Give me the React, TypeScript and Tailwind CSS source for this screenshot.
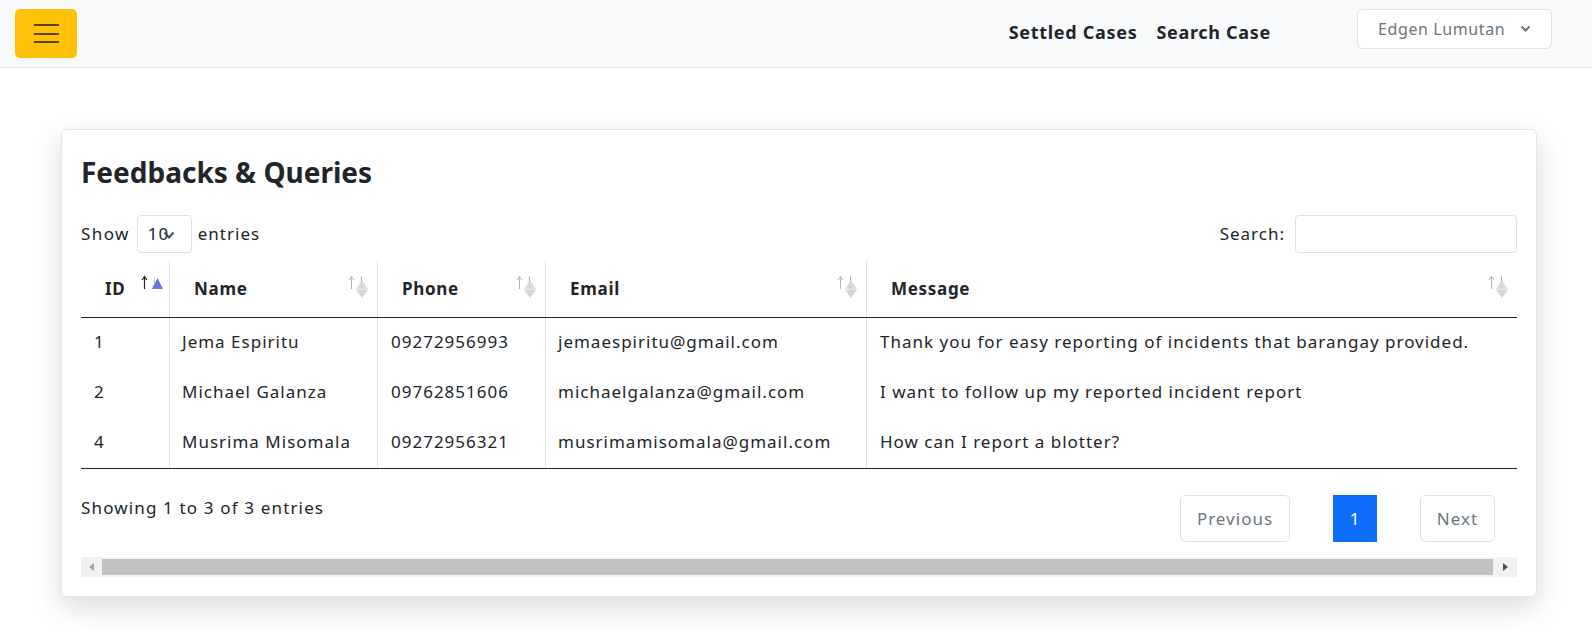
import React from 'react';

type Row = { id: string; name: string; phone: string; email: string; message: string };

const ROWS: Row[] = [
  {
    id: '1',
    name: 'Jema Espiritu',
    phone: '09272956993',
    email: 'jemaespiritu@gmail.com',
    message: 'Thank you for easy reporting of incidents that barangay provided.',
  },
  {
    id: '2',
    name: 'Michael Galanza',
    phone: '09762851606',
    email: 'michaelgalanza@gmail.com',
    message: 'I want to follow up my reported incident report',
  },
  {
    id: '4',
    name: 'Musrima Misomala',
    phone: '09272956321',
    email: 'musrimamisomala@gmail.com',
    message: 'How can I report a blotter?',
  },
];

const COLS = 'grid grid-cols-[88px_208px_168px_321px_1fr]';

// datatables sort arrows + the bootstrap triangles stacked on top of them
function SortIcon({ active = false }: { active?: boolean }) {
  return (
    <svg className="absolute right-0 top-[12px]" width="30" height="28" viewBox="0 0 30 28">
      {active ? (
        <>
          <path d="M5.5 3.5 V16 M3 7 L5.5 3.5 L8 7" fill="none" stroke="#212529" strokeWidth="1.2" />
          <path d="M15.5 3.5 V15.5 M13 12 L15.5 15.5 L18 12" fill="none" stroke="#d0d0d0" strokeWidth="1" />
          <path d="M18.5 5 L24 16 L13 16 Z" fill="#7272de" />
        </>
      ) : (
        <>
          <path d="M4.5 3.5 V16 M2 7 L4.5 3.5 L7 7" fill="none" stroke="#b4b4b4" strokeWidth="1" />
          <path d="M14.5 3.5 V15.5 M12 12 L14.5 15.5 L17 12" fill="none" stroke="#a8a8a8" strokeWidth="1" />
          <path d="M15 7 L21 16 L9 16 Z" fill="#d8d8d8" opacity="0.8" />
          <path d="M15 25 L21 16.5 L9 16.5 Z" fill="#cfcfcf" opacity="0.9" />
        </>
      )}
    </svg>
  );
}

export default function App() {
  const headers = ['ID', 'Name', 'Phone', 'Email', 'Message'];

  return (
    <div className="min-h-[634px] bg-white font-['Noto_Sans',sans-serif] text-[17px] tracking-[1px] text-[#212529]">
      {/* Navbar */}
      <header className="flex h-[68px] items-start border-b border-[#dee2e6] bg-[#f8f9fa]">
        <button className="ml-[15px] mt-[9px] flex h-[49px] w-[62px] flex-col items-center justify-center gap-[6.5px] rounded-[5px] bg-[#ffc107]">
          <span className="h-[2px] w-[25px] bg-[#5a4708]" />
          <span className="h-[2px] w-[25px] bg-[#5a4708]" />
          <span className="h-[2px] w-[25px] bg-[#5a4708]" />
        </button>
        <nav className="ml-auto mt-[19px] flex gap-[19px] text-[18px] font-bold leading-[26px] tracking-[0.7px]">
          <a>Settled Cases</a>
          <a>Search Case</a>
        </nav>
        <button className="ml-[86px] mr-[40px] mt-[9px] flex h-[40px] w-[195px] items-center rounded-[6px] border border-[#dee2e6] bg-white pl-[20px] pr-[20px] text-[16px] tracking-[0.6px] text-[#6c757d]">
          <span>Edgen Lumutan</span>
          <svg className="ml-auto" width="11" height="8" viewBox="0 0 11 8">
            <path d="M1.5 1.5 L5.5 5.5 L9.5 1.5" fill="none" stroke="#6c757d" strokeWidth="2" />
          </svg>
        </button>
      </header>

      {/* Card */}
      <div className="ml-[61px] mt-[61px] w-[1476px] rounded-[6px] border border-[#e3e6ea] bg-white px-[19px] pb-[19px] shadow-[0_10px_30px_rgba(0,0,0,0.15)]">
        <h3 className="mt-[25px] text-[28px] font-bold leading-[34px] tracking-normal">Feedbacks &amp; Queries</h3>

        <div className="mt-[26px] flex h-[38px] items-center">
          <span className="tracking-[1.4px]">Show</span>
          <div className="relative ml-[7px] flex h-[38px] w-[55px] items-center rounded-[4px] border border-[#dee2e6] pl-[10px]">
            <span>10</span>
            <svg className="absolute left-[25px] top-[15px]" width="12" height="9" viewBox="0 0 12 9">
              <path d="M1.5 1.5 L6 6.5 L10.5 1.5" fill="none" stroke="#4a5058" strokeWidth="2" />
            </svg>
          </div>
          <span className="ml-[6px]">entries</span>
          <span className="ml-auto">Search:</span>
          <div className="ml-[10px] h-[38px] w-[222px] rounded-[4px] border border-[#dee2e6]" />
        </div>

        {/* Table */}
        <div className="mt-[8px] w-[1436px]">
          <div className={`${COLS} h-[57px] border-b border-[#212529]`}>
            {headers.map((h, i) => (
              <div
                key={h}
                className={`relative flex items-center pl-[24px] font-bold tracking-[0.7px] ${i > 0 ? 'border-l border-[#dee2e6]' : ''}`}
              >
                {h}
                <SortIcon active={i === 0} />
              </div>
            ))}
          </div>
          <div className="border-b border-[#212529]">
            {ROWS.map((r) => (
              <div key={r.id} className={`${COLS} h-[50px] leading-[24px]`}>
                <div className="flex items-center pb-[3px] pl-[13px]">{r.id}</div>
                <div className="flex items-center border-l border-[#dee2e6] pb-[3px] pl-[12px]">{r.name}</div>
                <div className="flex items-center border-l border-[#dee2e6] pb-[3px] pl-[13px]">{r.phone}</div>
                <div className="flex items-center border-l border-[#dee2e6] pb-[3px] pl-[12px]">{r.email}</div>
                <div className="flex items-center border-l border-[#dee2e6] pb-[3px] pl-[13px]">{r.message}</div>
              </div>
            ))}
          </div>
        </div>

        {/* Footer */}
        <div className="flex items-start">
          <span className="mt-[27px] leading-[24px] tracking-[1.15px]">Showing 1 to 3 of 3 entries</span>
          <div className="ml-auto mr-[22px] mt-[26px] flex h-[47px] items-stretch gap-[43px]">
            <button className="w-[110px] rounded-[5px] border border-[#dee2e6] text-[#6c757d]">Previous</button>
            <button className="w-[44px] bg-[#0d6efd] text-white">1</button>
            <button className="w-[75px] rounded-[5px] border border-[#dee2e6] text-[#6c757d]">Next</button>
          </div>
        </div>

        {/* Horizontal scrollbar */}
        <div className="mt-[15px] flex h-[20px] w-[1436px] items-center bg-[#f1f1f1]">
          <div className="flex w-[21px] justify-center">
            <svg width="5" height="8" viewBox="0 0 5 8">
              <path d="M5 0 L0 4 L5 8 Z" fill="#a3a3a3" />
            </svg>
          </div>
          <div className="h-[16px] flex-1 bg-[#c1c1c1]" />
          <div className="flex w-[24px] justify-center">
            <svg width="5" height="8" viewBox="0 0 5 8">
              <path d="M0 0 L5 4 L0 8 Z" fill="#505050" />
            </svg>
          </div>
        </div>
      </div>
    </div>
  );
}
